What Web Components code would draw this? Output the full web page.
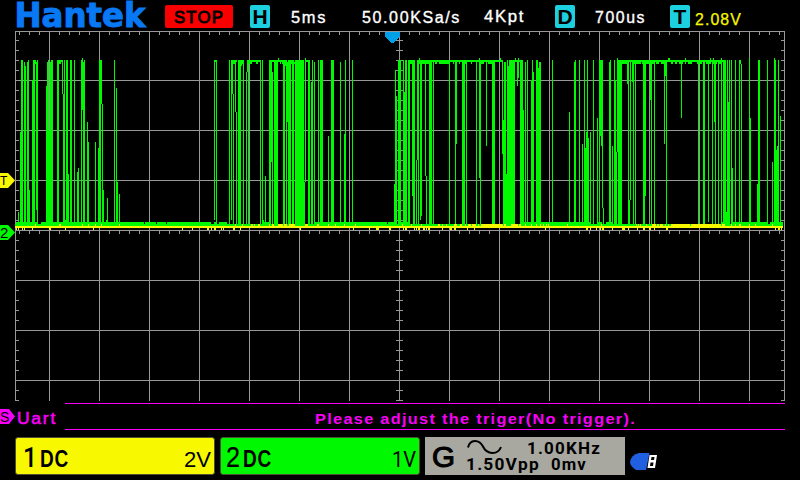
<!DOCTYPE html>
<html lang="en">
<head>
<meta charset="utf-8">
<title>Oscilloscope</title>
<style>
html,body{margin:0;background:#000}
body{width:800px;height:480px;overflow:hidden;font-family:"Liberation Sans",Arial,sans-serif}
</style>
</head>
<body>
<scope-screen></scope-screen>
<script>
class Base extends HTMLElement {
  connectedCallback() {
    if (!this.shadowRoot) this.attachShadow({mode: 'open'}).innerHTML = this.view();
  }
}

// Text stretched to a fixed width, so that the instrument's font metrics hold.
class FitText extends Base {
  view() {
    const a = n => this.getAttribute(n);
    return `<style>:host{display:block;line-height:0}svg{display:block;overflow:visible}
    text{font-family:${a('font') ? `"${a('font')}",` : ''}"Liberation Sans",Arial,sans-serif;font-size:${a('size')}px;font-weight:${a('weight') || 400};letter-spacing:${a('gap') || '.07em'};fill:currentColor;stroke:currentColor;stroke-width:${a('stroke') || 0}}</style>
    <svg width="${a('w')}" height="${a('h')}"><text x="0" y="${a('h')}" textLength="${a('w')}" lengthAdjust="spacingAndGlyphs">${this.textContent}</text></svg>`;
  }
}
customElements.define('fit-text', FitText);

class ScopeBadge extends Base {
  view() {
    return `<style>:host{display:flex;align-items:center;justify-content:center;width:20px;height:23px;border-radius:2px;background:#1cd0e0;color:#000;font:bold 21px/23px "Liberation Sans",Arial,sans-serif;box-sizing:border-box}</style><slot></slot>`;
  }
}
customElements.define('scope-badge', ScopeBadge);

class BrandLogo extends Base {
  view() {
    return `<style>:host{display:block}svg{display:block;overflow:visible}text{font:bold 33px "DejaVu Sans","Liberation Sans",sans-serif;fill:#0878f4;stroke:#0878f4;stroke-width:1;stroke-linejoin:miter}</style>
    <svg width="135" height="31"><text x="-1.5" y="27" textLength="131" lengthAdjust="spacingAndGlyphs">Hantek</text></svg>`;
  }
}
customElements.define('brand-logo', BrandLogo);

class ScopeHeader extends Base {
  view() {
    return `<style>
    :host{display:grid;height:31px;grid-template-columns:16px 149px 85px 41px 71px 122px 71px 40px 75px 25px 1fr;align-items:start}
    .stop{width:68px;height:23px;margin-top:5px;border-radius:2px;background:#f80000;display:flex;justify-content:center;align-items:center}
    scope-badge{margin-top:5px}
    .v{color:#fff;margin-top:10px}
    .y{color:#f8f800;margin-top:12px}
    </style>
    <span></span><brand-logo></brand-logo>
    <div class="stop"><fit-text w="50" h="12" size="17" stroke=".9">STOP</fit-text></div>
    <scope-badge>H</scope-badge>
    <fit-text class="v" w="36" h="13" size="16" stroke=".35" gap=".1em">5ms</fit-text>
    <fit-text class="v" w="99" h="13" size="16" stroke=".35" gap=".1em">50.00KSa/s</fit-text>
    <fit-text class="v" w="41" h="12" size="16" stroke=".35" gap=".1em">4Kpt</fit-text>
    <scope-badge>D</scope-badge>
    <fit-text class="v" w="51" h="13" size="16" stroke=".35" gap=".1em">700us</fit-text>
    <scope-badge>T</scope-badge>
    <fit-text class="y" w="47" h="13" size="16.5" stroke=".25">2.08V</fit-text>`;
  }
}
customElements.define('scope-header', ScopeHeader);

// Vertical strokes of channel 2: x, top, bottom (226 when left out), width (1).
const CH2 = `18,212 20,132 21,60,,2 24,62 25,66 27,62 28,60 29,190 32,80 33,60,,2 35,60,64 36,62,210 37,60
46,86 47,62 48,60 49,130 50,62 51,60,,2 57,60,,2 59,60,64,2 61,60,62 62,60,94 63,94 64,60,222 65,220 66,60,,2 68,174 70,60,,2 74,60 77,172 78,168
81,60 82,58,110 83,62 84,60 87,122 88,142 95,142 98,148 99,60,,2 101,60,104 102,104 103,190 106,220 107,198 114,60 116,88 117,182 119,194
214,60,220 215,60,62 216,60 229,60 231,60,220 232,60,94 233,62,64,2 233,94 235,62,112 236,112 232,60,62,5 238,60,,3 241,60,66 242,60,64 243,60 246,72 247,60,72 248,60 249,60,64,3 252,60,62,9 256,62,64,2 260,62 262,60,222 263,220
265,176 269,60,,2 271,60,162 272,72 272,60,62,3 274,60,,4 278,60,62,6 278,58,60 280,62,64 282,62,64 283,60,,2 285,60,66 286,60 287,62,122 288,60,,3 291,60,64 292,60,,2 294,62,64 295,60,,9 304,182 305,58,182 306,60,62,3 308,60,,2 311,82 312,60 314,62 318,60 320,60,,3 328,136 331,60,,3 340,62 344,134 345,60 352,60
394,184 395,70 396,96 398,60,,3 403,60 404,92 405,60,,2 408,60,,2 410,60,64,5 412,60,196 413,60,,2 416,160 417,60,160 418,60 419,60,64 420,60,220 421,60,216 425,60,176 426,176 429,60,,3 433,60
419,58,60 418,60,62,84 420,62,64,10 435,62,64,2 439,62,64,10 453,62,64 459,62,64 465,62,64 471,62,64 480,62,64,4 488,62,64,7
449,60 455,60 456,60,144 462,60,,3 466,60 476,60 479,58,178 480,60 486,60,146 492,60,,3 500,58,60 502,60,154 503,120 504,62,,2 506,174 507,60 508,66 509,60,,6 515,58,62 517,60,86 518,58,78 516,60,62,6 520,60,,3 523,110 525,62 527,60 531,80 532,60 533,72 536,60,,2 538,68 539,62,,2 552,60
569,112 574,62 575,60 579,60 582,144 584,60 585,148 586,132 587,60 588,138 590,132 593,60 597,118 599,60 600,60,136 601,60,146 602,60,208 603,208 609,62 610,60 612,146 614,60 615,80 616,152 617,58,152 618,60,,4
622,60,62,104 622,62,64,5 634,62,64,7 642,62,64,5 647,62,64,8 656,62,64,3 661,62,64,6 671,62,64,2 675,62,64,2 679,62,64,4 685,62,64 688,62,64,4 697,62,64,5 706,62,64,5 713,62,64,4 719,62,64,3
627,60,84 628,60 629,200 630,60,200 632,60,82 633,60 635,60 643,60,,2 645,60,196 650,60,100 651,60,224 654,60 664,60,144 665,60,76 666,60 668,58,60,2 681,60,118 685,58,60 698,60 703,60,,2 708,60,222 710,58,60 712,60 713,58,60 714,60,122 715,60 718,60 721,58
723,60,,3 726,212 727,60 728,102 729,60 731,60 732,168 735,60 739,60 740,60,64 741,64 749,58 750,118 757,184 758,60,,2 767,60 772,162 774,58 775,60 776,150 777,146 778,60 780,116`;
// Runs of the channel 2 low level.
const LOW = '16,21 41,103 145,11 157,9 167,10 177,34 214,2 219,8 262,7 315,72 388,8 398,10 523,46 569,22 597,5 606,7 721,5 733,19 752,16 770,13';
// Noise marks of channel 1, over and under its line.
const UP = '35,1 59,2 82,1 88,1 95,1 101,1 119,1 235,1 242,1 251,2 254,1 258,2 269,1 272,2 278,5 284,3 289,6 305,3 317,2 328,1 335,1 344,1 355,1 402,1 411,1 421,1 438,2 442,1 446,1 454,3 460,2 465,1 468,3 472,4 478,1 481,22 504,2 511,7 519,2 525,1 531,1 536,1 540,1 543,1 546,1 548,1 567,1 601,1 636,1 638,1 640,1 646,1 652,4 657,2 660,3 665,1 668,1 671,7 678,12 691,30 722,3 731,1 735,1 739,2 749,1 755,1 772,1';
const DOWN = '16,1 18,1 22,1 24,1 32,1 49,2 65,1 93,1 182,1 192,1 207,2 211,1 214,2 221,1 223,1 233,2 240,1 300,1 353,1 369,1 376,3 389,2 403,1 405,2 414,1 416,1 418,2 423,2 426,1 428,2 442,1 450,2 454,2 467,1 474,1 545,1 586,2 590,1 596,1 600,1 602,2 612,1 622,3 628,1 637,1 643,2 649,2 654,1 666,2 775,1 778,2 781,1';

class ScopePlot extends Base {
  view() {
    const r = (x, y, w, h) => `M${x} ${y}h${w}v${h}h${-w}z`;
    let g = r(15, 31, 770, 1) + r(15, 31, 1, 370) + r(784, 31, 1, 370);
    for (let x = 49; x < 784; x += 50) g += r(x, 31, 1, 370);
    for (let y = 80; y < 400; y += 50) g += r(15, y, 770, 1);
    for (let x = 19; x < 784; x += 10) g += r(x, 32, 1, 3) + r(x, 231, 1, 3);
    for (let y = 40; y <= 400; y += 10) g += r(16, y, 3, 1) + r(781, y, 3, 1) + r(396, y, 7, 1);
    const c = CH2.split(/\s+/).map(s => {
      const [x, t, b, w] = s.split(',').map(Number);
      return r(x, t, w || 1, (b || 226) - t);
    }).join('') + r(15, 224, 768, 2);
    const pairs = (s, y, h) => s.split(' ').map(p => { const [x, w] = p.split(',').map(Number); return r(x, y, w, h); }).join('');
    return `<style>:host{display:block;height:372px}svg{display:block}text{font-family:"Liberation Sans",Arial,sans-serif}</style>
    <svg width="800" height="372" viewBox="0 31 800 372" shape-rendering="crispEdges">
    <path fill="#989898" d="${g}"/>
    <path fill="#00f800" d="${c}${pairs(LOW, 222, 2)}"/>
    <path fill="#f8f800" d="${r(15, 226, 768, 2)}${pairs(UP, 224, 2)}${pairs(DOWN, 228, 2)}"/>
    <path fill="#00a0e8" d="M385 32H400V37L393 43H392L385 37z"/>
    <g shape-rendering="auto">
    <path fill="#f8f800" d="M0 173H8L15 180.5L8 188H0z"/><text x="0" y="185" font-size="12">T</text>
    <path fill="#00f800" d="M0 225H8L15 232.5L8 240H0z"/><text x="0" y="237.500" font-size="15">2</text>
    </g></svg>`;
  }
}
customElements.define('scope-plot', ScopePlot);

class MessageBar extends Base {
  view() {
    return `<style>:host{display:grid;grid-template-columns:17px 48px 720px;height:27px;color:#f800f8}
    svg{display:block;margin-top:6px}.u{margin-top:9px}
    .m{border-top:1px solid #f800f8;border-bottom:1px solid #f800f8;padding:8px 0 0 250px;box-sizing:border-box;height:27px}</style>
    <svg width="17" height="16"><path fill="#f800f8" d="M0 0H9L15 7.5L9 15H0z"/><text x="0" y="12.5" font-family="Liberation Sans" font-size="14">S</text></svg>
    <fit-text class="u" w="40" h="12" size="16" stroke=".5" gap=".1em">Uart</fit-text>
    <div class="m"><fit-text w="321" h="12" size="15.5" weight="700" gap=".08em">Please adjust the triger(No trigger).</fit-text></div>`;
  }
}
customElements.define('message-bar', MessageBar);

class ChannelCard extends Base {
  view() {
    const a = n => this.getAttribute(n);
    return `<style>:host{display:flex;justify-content:space-between;width:200px;height:38px;box-sizing:border-box;border:1px solid #505030;border-radius:3px;background:${a('color')};color:#000;padding:8px 3px 0 ${a('pad')}px}
    .l{display:flex;gap:3px}.d{margin-top:3px}.s{margin-top:5px}</style>
    <div class="l"><fit-text w="14" h="21" size="${a('n') === '1' ? 28 : 30}" gap="0" ${a('n') === '1' ? 'font="Roboto" weight="500"' : 'stroke=".2"'}>${a('n')}</fit-text>
    <fit-text class="d" w="29" h="18" size="24" weight="700" gap=".04em">DC</fit-text></div>
    <fit-text class="s" w="${a('sw')}" h="16" size="22" gap="0" ${a('n') === '2' ? 'font="Roboto"' : ''}>${a('scale')}</fit-text>`;
  }
}
customElements.define('channel-card', ChannelCard);

class GeneratorCard extends Base {
  view() {
    return `<style>:host{display:grid;grid-template-columns:34px 1fr;width:200px;height:38px;box-sizing:border-box;background:#a8a8a0;color:#000;padding:0 0 0 7px}
    .g{margin-top:9px}.r{display:flex;height:18px}svg{display:block}.f{margin-top:5px;margin-left:25px}.b{display:flex;gap:11px;margin-top:3px}</style>
    <fit-text class="g" w="23" h="21" size="29" stroke="1.1" gap="0">G</fit-text>
    <div><div class="r"><svg width="36" height="18"><path d="M2 10.500C4 2 13 2 17 9.500C21 18 32 18 35 10" fill="none" stroke="#000" stroke-width="2"/></svg>
    <fit-text class="f" w="74" h="12" size="16" weight="700" font="Roboto">1.00KHz</fit-text></div>
    <div class="b"><fit-text w="74" h="12" size="16" weight="700" font="Roboto">1.50Vpp</fit-text><fit-text w="36" h="12" size="16" weight="700" font="Roboto">0mv</fit-text></div></div>`;
  }
}
customElements.define('generator-card', GeneratorCard);

class UsbIcon extends Base {
  view() {
    return `<style>:host{display:block}svg{display:block}</style>
    <svg width="28" height="18"><path fill="#2060e0" d="M9 0H19.500L16 17H6Q0 13 0 9Q1 2 9 0z"/><path fill="#fff" d="M19.500 2H27L25 15H17.500z"/><path d="M21.500 4h3l-.5 3h-3zM20.500 9.500h3l-.5 3.500h-3z" fill="#000"/></svg>`;
  }
}
customElements.define('usb-icon', UsbIcon);

class ScopeFooter extends Base {
  view() {
    return `<style>:host{display:flex;align-items:flex-start;padding:7px 0 0 15px;gap:5px}usb-icon{margin-top:16px}</style>
    <channel-card n="1" scale="2V" sw="27" pad="7" color="#f8f800"></channel-card>
    <channel-card n="2" scale="1V" sw="24" pad="5" color="#00f800"></channel-card>
    <generator-card></generator-card><usb-icon></usb-icon>`;
  }
}
customElements.define('scope-footer', ScopeFooter);

class ScopeScreen extends Base {
  view() {
    return `<style>:host{display:flex;flex-direction:column;width:800px;height:480px;background:#000;overflow:hidden}</style>
    <scope-header></scope-header><scope-plot></scope-plot><message-bar></message-bar><scope-footer></scope-footer>`;
  }
}
customElements.define('scope-screen', ScopeScreen);
</script>
</body>
</html>
